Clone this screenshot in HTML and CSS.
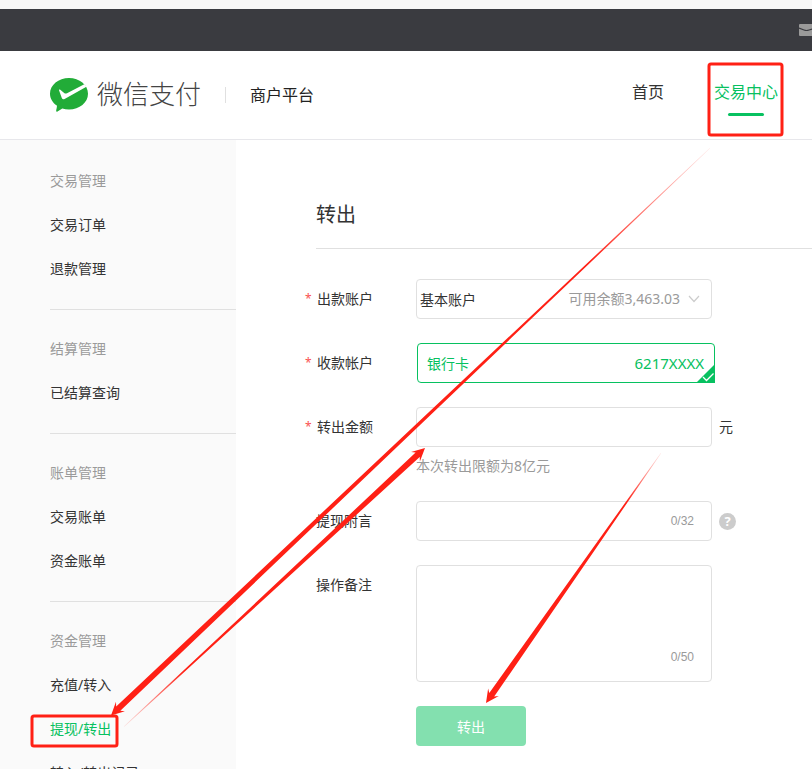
FILE: index.html
```html
<!DOCTYPE html>
<html lang="zh-CN">

<head>
    <meta charset="UTF-8">
    <meta name="viewport" content="width=device-width, initial-scale=1.0">
    <title>微信支付 商户平台</title>
    <link rel="stylesheet" href="styles.css">
</head>

<body>
    <div class="topbar">
        <svg class="mail" width="13" height="12" viewBox="0 0 13 12">
            <path d="M0 1Q0 0 1 0H13V12H1Q0 12 0 11Z" fill="#9a9a9a" />
            <path d="M0 4L5 6Q7.500 7 10 6L13 5" fill="none" stroke="#3a3b40" stroke-width="1.2" />
        </svg>
    </div>

    <header class="header">
        <a class="logo" href="#">
            <svg width="38" height="34" viewBox="0 0 38 34">
                <path d="M19 0C8.500 0 0 7 0 15.800C0 20.500 2.600 24.700 6.800 27.600C7.300 28.200 6.300 31.500 6.200 33.100C6.200 33.900 6.900 33.900 7.500 33.500L12.300 30.600C14.400 31.300 16.700 31.600 19 31.600C29.500 31.600 38 24.600 38 15.800C38 7 29.500 0 19 0Z" fill="#22ac38" />
                <path d="M9 12.200C8.800 11.200 9.600 11.200 10.300 11.800L14.200 15Q15.500 16 17 15.200L34.300 6.200L36.400 8.800L14.600 20.900Q12.700 22 11.800 20Z" fill="#fff" />
            </svg>
            <span class="logo-text">微信支付</span>
        </a>
        <span class="platform">商户平台</span>
        <nav class="nav">
            <a href="#">首页</a>
            <a class="active" href="#">交易中心</a>
        </nav>
    </header>

    <div class="content">
        <aside class="sidebar">
            <div class="group">
                <h2>交易管理</h2>
                <a href="#">交易订单</a>
                <a href="#">退款管理</a>
            </div>
            <div class="group">
                <h2>结算管理</h2>
                <a href="#">已结算查询</a>
            </div>
            <div class="group">
                <h2>账单管理</h2>
                <a href="#">交易账单</a>
                <a href="#">资金账单</a>
            </div>
            <div class="group">
                <h2>资金管理</h2>
                <a href="#">充值/转入</a>
                <a class="active" href="#">提现/转出</a>
                <a href="#">转入/转出记录</a>
            </div>
        </aside>

        <main class="main">
            <h1>转出</h1>
            <form class="form">
                <div class="row">
                    <label class="name required" for="account">出款账户</label>
                    <div class="field">
                        <select id="account">
                            <option>基本账户</option>
                        </select>
                        <span class="balance">可用余额3,463.03</span>
                        <svg class="chevron" width="12" height="8" viewBox="0 0 12 8">
                            <path d="M1 1L6 6.500L11 1" fill="none" stroke="#ccc" stroke-width="1.2" />
                        </svg>
                    </div>
                </div>

                <div class="row">
                    <label class="name required" for="card">收款帐户</label>
                    <div class="card">
                        <input type="radio" id="card" name="card" checked>
                        <span>银行卡</span>
                        <span class="card-no">6217XXXX</span>
                        <svg class="corner" width="19" height="19" viewBox="0 0 19 19">
                            <path d="M19 0V19H0Z" fill="#07c160" />
                            <path d="M7 13L10.500 16.500L17.500 9.500" fill="none" stroke="#fff" stroke-width="1.3" />
                        </svg>
                    </div>
                </div>

                <div class="row">
                    <label class="name required" for="amount">转出金额</label>
                    <div>
                        <div class="field">
                            <input type="text" id="amount">
                        </div>
                        <p class="hint">本次转出限额为8亿元</p>
                    </div>
                    <span class="unit">元</span>
                </div>

                <div class="row">
                    <label class="name" for="memo">提现附言</label>
                    <div class="field">
                        <input type="text" id="memo" maxlength="32">
                        <span class="count">0/32</span>
                    </div>
                    <button type="button" class="help">?</button>
                </div>

                <div class="row">
                    <label class="name" for="remark">操作备注</label>
                    <div class="field">
                        <textarea id="remark" maxlength="50"></textarea>
                        <span class="count">0/50</span>
                    </div>
                </div>

                <button type="submit" class="submit">转出</button>
            </form>
        </main>
    </div>

    <!-- step marks: two frames and three arrows -->
    <svg class="marks" width="812" height="769" viewBox="0 0 812 769">
        <defs>
            <linearGradient id="fade">
                <stop offset="0.8" stop-color="#ff2015" />
                <stop offset="1" stop-color="#ff2015" stop-opacity="0.1" />
            </linearGradient>
        </defs>
        <g fill="none" stroke="#ff2015" stroke-width="3">
            <rect x="709" y="64" width="73" height="71" rx="2" />
            <rect x="32" y="716" width="85" height="30" rx="2" />
        </g>
        <g fill="url(#fade)">
            <path transform="translate(111 715.500) rotate(-43.450)" d="M0 0L13 -6.500L10 -3L825 -0.300V0.300L10 3L13 6.500Z" />
            <path transform="translate(425 448) rotate(137.200)" d="M0 0L13 -6.500L10 -3L410 -0.300V0.300L10 3L13 6.500Z" />
            <path transform="translate(486 703) rotate(-55)" d="M0 0L13 -6.500L10 -3L305 -0.300V0.300L10 3L13 6.500Z" />
        </g>
    </svg>
</body>

</html>
```
FILE: styles.css
```css
* {
    box-sizing: border-box;
}

body {
    margin: 0;
    height: 100vh;
    display: flex;
    flex-direction: column;
    overflow: hidden;
    position: relative;
    border-top: 9px solid #f7f7f7;
    background: #fff;
    color: #333;
    font-family: "Noto Sans", "Noto Sans CJK SC", sans-serif;
    font-size: 14px;
}

a {
    color: inherit;
    text-decoration: none;
}

h1, h2, p {
    margin: 0;
    font-weight: normal;
}

input, select, textarea, button {
    font: inherit;
    color: inherit;
}

.topbar {
    height: 42px;
    flex-shrink: 0;
    display: flex;
    justify-content: flex-end;
    align-items: center;
    background: #3a3b40;
}

.header {
    height: 89px;
    flex-shrink: 0;
    display: flex;
    align-items: center;
    padding: 0 34px 0 50px;
    border-bottom: 1px solid #e7e7eb;
}

.logo {
    display: flex;
    align-items: center;
    gap: 9px;
}

.logo-text {
    padding-bottom: 4px;
    color: #444;
    font-family: "Noto Sans CJK SC", sans-serif;
    font-size: 26px;
    font-weight: 300;
    line-height: 30px;
}

.platform {
    margin-left: 24px;
    padding-left: 24px;
    border-left: 1px solid #e0e0e0;
    color: #222;
    font-size: 16px;
    line-height: 16px;
}

.nav {
    display: flex;
    align-self: flex-start;
    gap: 50px;
    margin-left: auto;
    padding-top: 29px;
    font-size: 16px;
    line-height: 24px;
}

.nav .active {
    color: #07c160;
}

.nav .active::after {
    content: '';
    display: block;
    width: 36px;
    height: 3px;
    margin: 9px auto 0;
    border-radius: 2px;
    background: #07c160;
}

.content {
    flex: 1;
    min-height: 0;
    display: flex;
}

.sidebar {
    width: 236px;
    flex-shrink: 0;
    padding: 2px 0 0 50px;
    background: #fafafa;
    overflow: hidden;
}

.group {
    padding: 17px 0 18px;
    border-bottom: 1px solid #e0e0e0;
}

.group h2, .group a {
    display: block;
    font-size: 14px;
    line-height: 44px;
}

.group h2 {
    color: #9a9a9a;
}

.group .active {
    color: #07c160;
}

.main {
    flex: 1;
    padding: 58px 0 0 80px;
}

.main h1 {
    padding-bottom: 16px;
    margin-bottom: 30px;
    border-bottom: 1px solid #e0e0e0;
    font-size: 20px;
    line-height: 34px;
}

.form {
    margin-left: -12px;
}

.row {
    display: flex;
    margin-bottom: 24px;
}

.name {
    width: 112px;
    flex-shrink: 0;
    padding-left: 12px;
    line-height: 40px;
}

.required {
    display: flex;
    padding-left: 0;
}

.required::before {
    content: '*';
    width: 12px;
    padding-left: 1px;
    color: #fa5151;
    font-size: 12px;
}

.field {
    position: relative;
    width: 296px;
}

.field input, .field select, .field textarea {
    display: block;
    width: 100%;
    height: 40px;
    padding: 0 3px;
    border: 1px solid #e0e0e0;
    border-radius: 4px;
    background: #fff;
    outline: none;
    appearance: none;
}

.field textarea {
    height: 117px;
    resize: none;
}

.balance, .count {
    position: absolute;
    right: 32px;
    top: 0;
    color: #9a9a9a;
    line-height: 40px;
    pointer-events: none;
}

.count {
    top: auto;
    right: 18px;
    bottom: 16px;
    font-family: "Liberation Sans", sans-serif;
    font-size: 12px;
    line-height: 18px;
}

.field input + .count {
    bottom: 11px;
}

.chevron {
    position: absolute;
    right: 12px;
    top: 16px;
    pointer-events: none;
}

.card {
    position: relative;
    display: flex;
    justify-content: space-between;
    align-items: center;
    width: 298px;
    height: 40px;
    margin-left: 1px;
    padding: 0 10px 0 9px;
    border: 1px solid #07c160;
    border-radius: 4px 4px 0 4px;
    color: #07c160;
}

.card input {
    position: absolute;
    inset: 0;
    margin: 0;
    appearance: none;
    cursor: pointer;
}

.card-no {
    font-size: 15px;
}

.corner {
    position: absolute;
    right: -1px;
    bottom: -1px;
}

.hint {
    color: #9a9a9a;
    line-height: 22px;
    padding-top: 8px;
}

.unit {
    margin-left: 7px;
    line-height: 40px;
}

.help {
    align-self: center;
    width: 17px;
    height: 17px;
    margin-left: 7px;
    padding: 0;
    border: none;
    border-radius: 50%;
    background: #ccc;
    color: #fff;
    font-size: 13px;
    font-weight: bold;
    line-height: 17px;
}

.submit {
    width: 110px;
    height: 40px;
    margin-left: 112px;
    border: none;
    border-radius: 4px;
    background: #83e0af;
    color: #fff;
}

.marks {
    position: absolute;
    left: 0;
    top: -9px;
    pointer-events: none;
}
```
